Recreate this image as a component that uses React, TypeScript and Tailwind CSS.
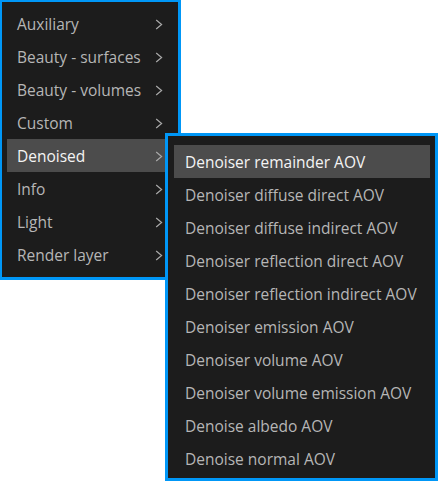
import React from 'react';

const mainItems = [
  'Auxiliary',
  'Beauty - surfaces',
  'Beauty - volumes',
  'Custom',
  'Denoised',
  'Info',
  'Light',
  'Render layer',
];

const subItems = [
  'Denoiser remainder AOV',
  'Denoiser diffuse direct AOV',
  'Denoiser diffuse indirect AOV',
  'Denoiser reflection direct AOV',
  'Denoiser reflection indirect AOV',
  'Denoiser emission AOV',
  'Denoiser volume AOV',
  'Denoiser volume emission AOV',
  'Denoise albedo AOV',
  'Denoise normal AOV',
];

const Chevron: React.FC = () => (
  <svg width="8" height="11" viewBox="0 0 8 11" fill="none" className="shrink-0">
    <path d="M1.2 1 L6.6 5.5 L1.2 10" stroke="#a9a9a9" strokeWidth="1.2" />
  </svg>
);

const App: React.FC = () => {
  const active = 'Denoised';

  return (
    <div
      className="relative w-[438px] h-[481px] bg-white overflow-hidden"
      style={{ fontFamily: '"Open Sans", "Noto Sans", sans-serif' }}
    >
      {/* Main menu */}
      <div className="w-[181px] bg-[#1c1c1c] border-[#0097f7] border-l-2 border-t-2 border-r-[3px] border-b-[3px] pt-[5px] pb-[6px]">
        {mainItems.map((item) => (
          <div
            key={item}
            className={`mx-[5px] h-[33px] flex items-center justify-between pl-[10px] pr-[10px] pt-[2px] text-[15.5px] ${
              item === active ? 'bg-[#4c4c4c] text-[#f4f4f4]' : 'text-[#b6b6b6]'
            }`}
          >
            <span>{item}</span>
            <Chevron />
          </div>
        ))}
      </div>

      {/* Submenu */}
      <div className="absolute left-[165px] top-[133px] w-[273px] h-[348px] bg-[#1c1c1c] border-[3px] border-[#0097f7] pt-[9px]">
        {subItems.map((item, i) => (
          <div
            key={item}
            className={`ml-[6px] mr-[5px] h-[33px] flex items-center pl-[11px] pt-[2px] text-[15.5px] ${
              i === 0 ? 'bg-[#4c4c4c] text-[#f4f4f4]' : 'text-[#b6b6b6]'
            }`}
          >
            {item}
          </div>
        ))}
      </div>
    </div>
  );
};

export default App;
